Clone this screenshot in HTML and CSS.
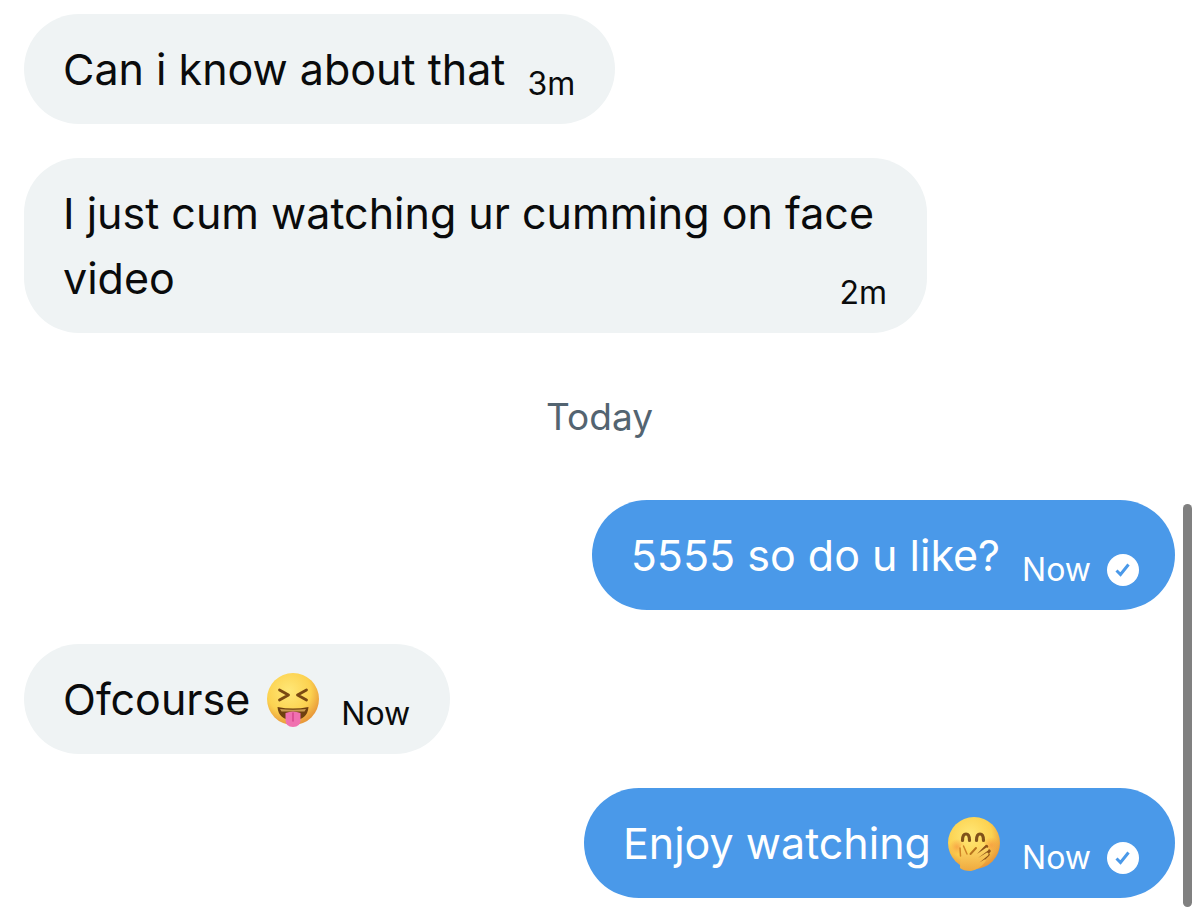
FILE: index.html
```html
<!DOCTYPE html>
<html lang="en">
<head>
    <meta charset="UTF-8">
    <meta name="viewport" content="width=device-width, initial-scale=1.0">
    <title>Messages</title>
    <link rel="stylesheet" href="styles.css">
</head>
<body>
    <!-- Shared gradients and the sent tick -->
    <svg class="defs" width="0" height="0" aria-hidden="true">
        <defs>
            <radialGradient id="face" cx="0.42" cy="0.35" r="0.65">
                <stop offset="0" stop-color="#ffe878"/>
                <stop offset="0.65" stop-color="#fcd250"/>
                <stop offset="1" stop-color="#e8983a"/>
            </radialGradient>
            <radialGradient id="blush">
                <stop offset="0" stop-color="#f58a3c" stop-opacity="0.6"/>
                <stop offset="1" stop-color="#f58a3c" stop-opacity="0"/>
            </radialGradient>
            <linearGradient id="hand" x1="0" y1="0" x2="0" y2="1">
                <stop offset="0" stop-color="#ffdf6c"/>
                <stop offset="1" stop-color="#efa93e"/>
            </linearGradient>
            <symbol id="tick" viewBox="0 0 32 32">
                <circle cx="16" cy="16" r="16" fill="#fff"/>
                <path d="M9.500 16.500l4 4 8-10" fill="none" stroke="#4a99e9" stroke-width="3"/>
            </symbol>
        </defs>
    </svg>

    <main class="chat">
        <div class="message received">
            <p class="text">Can i know about that</p>
            <div class="meta"><span>3m</span></div>
        </div>

        <div class="message received">
            <p class="text">I just cum watching ur cumming on face video <span class="meta corner">2m</span></p>
        </div>

        <div class="day">Today</div>

        <div class="message sent">
            <p class="text">5555 so do u like?</p>
            <div class="meta">
                <span>Now</span>
                <svg class="check" role="img" aria-label="Sent"><use href="#tick"/></svg>
            </div>
        </div>

        <div class="message received">
            <p class="text">Ofcourse
                <svg class="emoji" viewBox="0 0 52 54" role="img" aria-label="Squinting face with tongue">
                    <circle cx="26" cy="26" r="26" fill="url(#face)"/>
                    <path d="M12.500 17L21.500 22l-9 5M39.500 17L30.500 22l9 5" fill="none" stroke="#7b4a12" stroke-width="2.800" stroke-linejoin="round" stroke-linecap="round"/>
                    <path d="M10.500 34q15.500 3 31 0q-1 13-15.500 13T10.500 34z" fill="#6f4010"/>
                    <path d="M13 36q13 1.500 26 0l-1.500 2.500h-23z" fill="#c99b50"/>
                    <path d="M18.500 40q7.500-3 15 0v6.500q0 7.500-7.500 7.500t-7.500-7.500z" fill="#f070b0"/>
                    <path d="M26 40v8" fill="none" stroke="#d6448b" stroke-width="1.500" stroke-linecap="round"/>
                </svg>
            </p>
            <div class="meta"><span>Now</span></div>
        </div>

        <div class="message sent">
            <p class="text">Enjoy watching
                <svg class="emoji" viewBox="0 0 52 54" role="img" aria-label="Face with hand over mouth">
                    <circle cx="26" cy="26" r="26" fill="url(#face)"/>
                    <circle cx="9" cy="30" r="8" fill="url(#blush)"/>
                    <circle cx="43" cy="28" r="8" fill="url(#blush)"/>
                    <path d="M14.500 23.500q0-6.500 3.500-6.500t3.500 6.500M28.500 23.500q0-6.500 3.500-6.500t3.500 6.500" fill="none" stroke="#80521a" stroke-width="3.200" stroke-linecap="round"/>
                    <path d="M30 47l10-9.500M30.500 41.500l10.500-7.500M29 37l9.500-7.500" fill="none" stroke="#8f5418" stroke-width="3.500" stroke-linecap="round"/>
                    <path d="M12 51q0-7 1-12l-.5-9q.5-3 3-1.500l3 8L23 38 34 26.500q3.500-1 3 2L29 37l9.500-6.500q3 .5 1.500 3L30 41l9-5.500q2.500.5 1 3L31.500 45.500l5-3q2.500 0 .5 2.500-5 7-14 9-8 0-11-3z" fill="url(#hand)"/>
                    <path d="M22.500 37l5.500-6" fill="none" stroke="#b8741f" stroke-width="2" stroke-linecap="round"/>
                    <path d="M12.500 39l-.5-8M15.500 29l3.500 8" fill="none" stroke="#cf8426" stroke-width="1.500" stroke-linecap="round"/>
                </svg>
            </p>
            <div class="meta">
                <span>Now</span>
                <svg class="check" role="img" aria-label="Sent"><use href="#tick"/></svg>
            </div>
        </div>
    </main>

    <div class="scrollbar"></div>
</body>
</html>
```

FILE: styles.css
```css
body {
    margin: 0;
    background: #fff;
    color: #0a0b0c;
    font-family: 'Inter', sans-serif;
    font-size: 43px;
}

.defs {
    position: absolute;
}

.chat {
    display: flex;
    flex-direction: column;
    align-items: flex-start;
    gap: 34px;
    padding: 14px 25px 18px 24px;
}

.message {
    display: flex;
    gap: 22px;
    box-sizing: border-box;
    max-width: calc(100% - 248px);
    padding: 23px 40px 22px 39px;
    border-radius: 55px;
}

.received {
    background: #eff3f4;
}

.sent {
    align-self: flex-end;
    padding-right: 36px;
    background: #4a99e9;
    color: #fff;
}

.text {
    margin: 0;
    line-height: 65px;
}

.meta {
    display: flex;
    align-items: center;
    align-self: flex-end;
    gap: 16px;
    font-size: 32px;
    line-height: 36px;
}

/* time at the end of the last line of a long message */
.corner {
    float: right;
    margin-top: 29px;
}

.check {
    width: 32px;
    height: 32px;
}

.emoji {
    width: 52px;
    height: 54px;
    margin-left: 5px;
    vertical-align: -12px;
}

.day {
    align-self: center;
    color: #536471;
    font-size: 37px;
    line-height: 99px;
}

.scrollbar {
    position: fixed;
    right: 8px;
    bottom: 8px;
    width: 9px;
    height: 44%;
    border-radius: 5px;
    background: #808080;
}
```
